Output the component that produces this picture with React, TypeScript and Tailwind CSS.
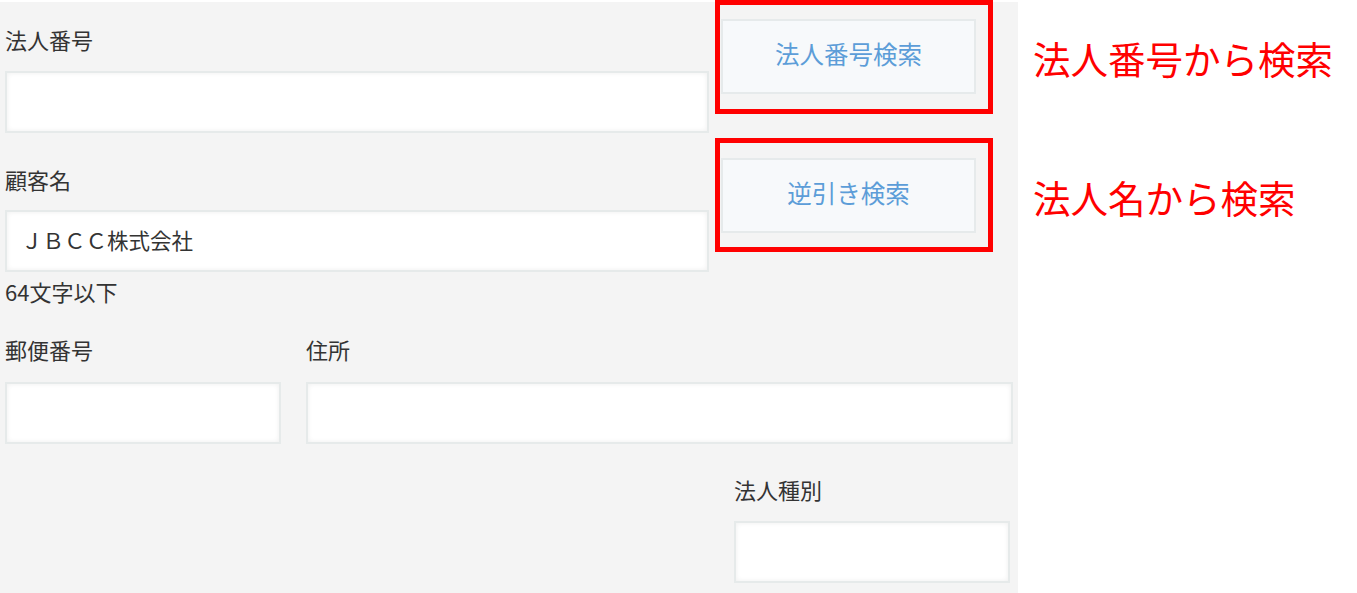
import React from "react";

const font = {
  fontFamily: '"Noto Sans CJK JP", "Noto Sans", sans-serif',
};

function Field({ className = "", value }: { className?: string; value?: string }) {
  return (
    <div
      className={`h-[62px] border-2 border-[#e6eaea] bg-white shadow-[inset_0_0_5px_rgba(0,0,0,0.07)] flex items-center px-[14px] pb-[2px] text-[21.5px] text-[#333] ${className}`}
    >
      {value}
    </div>
  );
}

function Label({ className = "", children }: { className?: string; children: React.ReactNode }) {
  return <div className={`h-[30px] leading-[25px] text-[22px] ${className}`}>{children}</div>;
}

function SearchButton({ label }: { label: string }) {
  return (
    <div className="h-[75px] w-[255px] border-2 border-[#e6eaeb] bg-[#f7f9fb] flex items-center justify-center pb-[4px] text-[24.5px] text-[#5c9dd8]">
      {label}
    </div>
  );
}

export default function App() {
  return (
    <div className="relative flex w-[1357px] h-[593px] bg-white" style={font}>
      <div className="mt-[2px] w-[1018px] h-[591px] bg-[#f4f4f4] text-[#333]">
        <div className="flex">
          <div className="pl-[5px] w-[709px] pt-[25px]">
            <Label>法人番号</Label>
            <Field className="mt-[14px]" />
            <Label className="mt-[34px]">顧客名</Label>
            <Field className="mt-[13px]" value="ＪＢＣＣ株式会社" />
            <Label className="mt-[7px]">64文字以下</Label>
          </div>
          <div className="ml-[12px] pt-[17px] flex flex-col gap-[64px]">
            <SearchButton label="法人番号検索" />
            <SearchButton label="逆引き検索" />
          </div>
        </div>

        <div className="mt-[28px] flex gap-[25px] pl-[5px]">
          <div className="w-[276px]">
            <Label>郵便番号</Label>
            <Field className="mt-[15px]" />
          </div>
          <div className="w-[707px]">
            <Label>住所</Label>
            <Field className="mt-[15px]" />
          </div>
        </div>

        <div className="mt-[33px] ml-[734px] w-[276px]">
          <Label>法人種別</Label>
          <Field className="mt-[14px]" />
        </div>
      </div>

      <div className="pl-[15px] pt-[33px] text-[37.5px] text-[#ff0000]">
        <div className="h-[50px] leading-[50px] whitespace-nowrap">法人番号から検索</div>
        <div className="mt-[89px] h-[50px] leading-[50px] whitespace-nowrap">法人名から検索</div>
      </div>

      <div className="absolute left-[715px] top-0 w-[278px] h-[114px] border-[5px] border-[#ff0000]" />
      <div className="absolute left-[715px] top-[138px] w-[278px] h-[114px] border-[5px] border-[#ff0000]" />
    </div>
  );
}
